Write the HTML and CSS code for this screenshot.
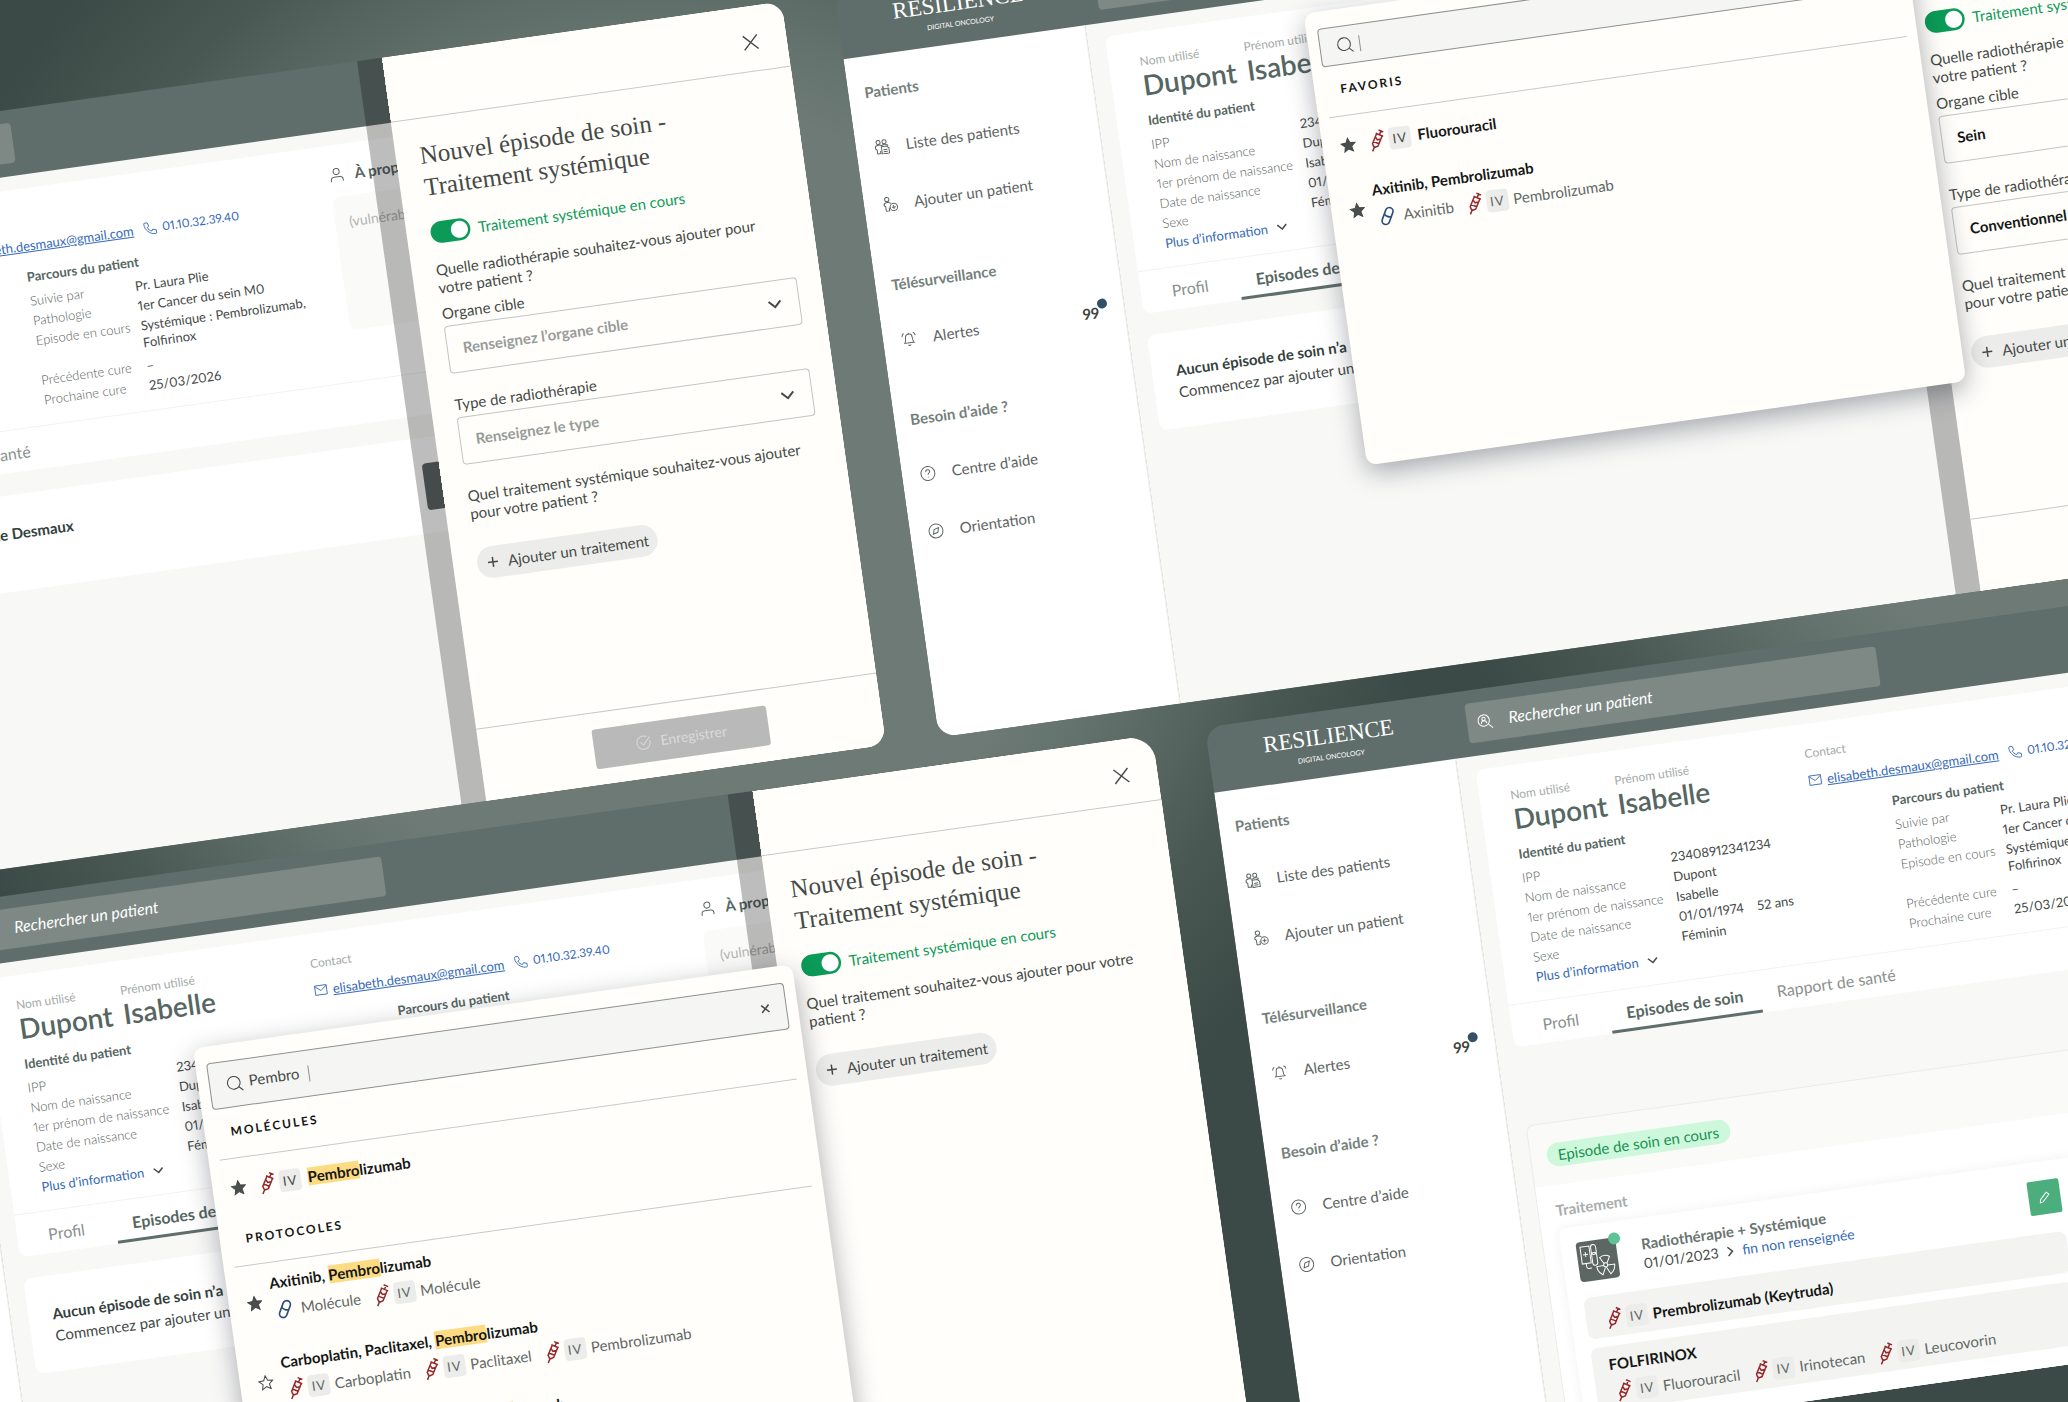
FILE: index.html
```html
<!DOCTYPE html>
<html lang="fr">
<head>
    <meta charset="UTF-8">
    <meta name="viewport" content="width=device-width, initial-scale=1.0">
    <title>Resilience - Episodes de soin</title>
    <link rel="stylesheet" href="styles.css">
</head>
<body>
    <!-- Icons -->
    <svg class="sprite" aria-hidden="true">
        <symbol id="i-list" viewBox="0 0 24 24">
            <circle cx="7" cy="5" r="3"/><circle cx="16" cy="5" r="3"/>
            <path d="M4 22v-6l-2-2v-2c0-2 2-3 5-3 2 0 3 0 4.500 1.500C13 9.500 14 9 16 9c3 0 5 1 5 3M4 22h5v-4"/>
            <path d="M11 12h8l3 3v8H11zM13.500 17h6M13.500 20h6"/>
        </symbol>
        <symbol id="i-add" viewBox="0 0 24 24">
            <circle cx="8" cy="4.500" r="3.200"/>
            <path d="M5 22v-7l-2-2v-1c0-2 2-3 5-3s5 1 5 2.500M5 22h5v-5"/>
            <circle cx="17" cy="17" r="5.500"/><path d="M17 14v6M14 17h6"/>
        </symbol>
        <symbol id="i-bell" viewBox="0 0 24 24">
            <path d="M5 18c2-2 2-4 2-8 0-3 2-5 5-5s5 2 5 5c0 4 0 6 2 8zM10 21c1 1.500 3 1.500 4 0M12 5V3M2 8c0-3 1-4 3-5M22 8c0-3-1-4-3-5"/>
        </symbol>
        <symbol id="i-help" viewBox="0 0 24 24">
            <circle cx="12" cy="12" r="10.500"/><path d="M9 9.500c0-4 6-4 6-.5 0 2.500-3 2.500-3 5M12 17v1"/>
        </symbol>
        <symbol id="i-compass" viewBox="0 0 24 24">
            <circle cx="12" cy="12" r="10.500"/><path d="M16.500 7.500l-2 7-7 2 2-7z"/>
        </symbol>
        <symbol id="i-search-user" viewBox="0 0 24 24">
            <circle cx="10.500" cy="10.500" r="8.500"/><path d="M17 17l6 6M6.500 15c0-3 2-4 4-4s4 1 4 4"/><circle cx="10.500" cy="8" r="2.500"/>
        </symbol>
        <symbol id="i-search" viewBox="0 0 24 24">
            <circle cx="11" cy="11" r="9"/><path d="M17.500 17.500L23 23"/>
        </symbol>
        <symbol id="i-mail" viewBox="0 0 24 24"><path d="M2 4h20v16H2zM2 5l10 8L22 5"/></symbol>
        <symbol id="i-phone" viewBox="0 0 24 24">
            <path d="M3 2h5l2 6-3 2c1 3 4 6 7 7l2-3 6 2v4c0 2-1 2-3 2C10 22 2 13 2 5c0-2 0-3 1-3z"/>
        </symbol>
        <symbol id="i-user" viewBox="0 0 24 24"><circle cx="12" cy="7" r="4.500"/><path d="M3 22v-2c0-3 2-5 5-5h8c3 0 5 2 5 5v2"/></symbol>
        <symbol id="i-down" viewBox="0 0 24 24"><path d="M3 7.500l9 9 9-9"/></symbol>
        <symbol id="i-right" viewBox="0 0 24 24"><path d="M8 3l9 9-9 9"/></symbol>
        <symbol id="i-close" viewBox="0 0 24 24"><path d="M2 2l20 20M22 2L2 22"/></symbol>
        <symbol id="i-plus" viewBox="0 0 24 24"><path d="M12 2v20M2 12h20"/></symbol>
        <symbol id="i-star" viewBox="0 0 24 24"><path d="M12 2l3 7 7.500.7-5.700 5 1.700 7.500L12 18.300l-6.500 3.900 1.700-7.500-5.700-5L9 9z"/></symbol>
        <symbol id="i-check" viewBox="0 0 24 24"><path d="M21.500 9.500A10 10 0 1 1 17 3.500M7.500 11l4 4.500L22 4"/></symbol>
        <symbol id="i-pen" viewBox="0 0 24 24"><path d="M16.500 2.500l5 5L8 21l-6 1.500L3.500 16z"/></symbol>
        <symbol id="i-syringe" viewBox="0 0 24 24">
            <g transform="rotate(30 12 12)"><path d="M9.500 1.500h5M12 1.500v4M8 5.500h8M9 5.500v11l2 2h2l2-2v-11M9 9l3 2 3-2M9 14h6M12 18.500v5"/></g>
        </symbol>
        <symbol id="i-pill" viewBox="0 0 24 24">
            <g transform="rotate(28 12 12)"><rect x="7.500" y="1.500" width="9" height="21" rx="4.500"/><path d="M7.500 11c2 2 7 2 9 0"/></g>
        </symbol>
        <symbol id="i-care" viewBox="0 0 40 40">
            <path d="M4 5h9v17H4zM6 13h5M8.500 10.500v5M8 22v3c0 2 2 3 5 2"/>
            <rect x="14.500" y="4" width="5" height="10" rx="2.500"/><rect x="14.500" y="12" width="5" height="13" rx="2.500"/>
            <circle cx="27" cy="26" r="2"/><path d="M25.500 24.500L22 18c3-2 7-2 10 0l-3.500 6.500M25 26.500h-7c0 4 2 7 5 9l3.500-7M29 26.500h7c0 4-2 7-5 9l-3.500-7"/>
        </symbol>
    </svg>

    <!-- Parts shared by every window -->
    <template id="topbar">
        <span class="logo"><span class="logo-name">RESILIENCE</span><span class="logo-sub">DIGITAL ONCOLOGY</span></span>
        <label class="patient-search">
            <svg class="icon"><use href="#i-search-user"/></svg>
            <input type="search" placeholder="Rechercher un patient" aria-label="Rechercher un patient">
        </label>
    </template>

    <template id="sidebar">
        <h2>Patients</h2>
        <a href="#"><svg class="icon"><use href="#i-list"/></svg>Liste des patients</a>
        <a href="#"><svg class="icon"><use href="#i-add"/></svg>Ajouter un patient</a>
        <h2>Télésurveillance</h2>
        <a href="#"><svg class="icon"><use href="#i-bell"/></svg>Alertes<span class="count">99</span></a>
        <h2>Besoin d’aide ?</h2>
        <a href="#"><svg class="icon"><use href="#i-help"/></svg>Centre d’aide</a>
        <a href="#"><svg class="icon"><use href="#i-compass"/></svg>Orientation</a>
    </template>

    <template id="patient">
        <div class="patient-info">
            <div class="identity">
                <div class="names">
                    <div><span class="hint">Nom utilisé</span><strong>Dupont</strong></div>
                    <div><span class="hint">Prénom utilisé</span><strong>Isabelle</strong></div>
                </div>
                <h3>Identité du patient</h3>
                <dl>
                    <dt>IPP</dt><dd>23408912341234</dd>
                    <dt>Nom de naissance</dt><dd>Dupont</dd>
                    <dt>1er prénom de naissance</dt><dd>Isabelle</dd>
                    <dt>Date de naissance</dt><dd>01/01/1974 <span class="age">52 ans</span></dd>
                    <dt>Sexe</dt><dd>Féminin</dd>
                </dl>
                <a class="more" href="#">Plus d’information <svg class="icon"><use href="#i-down"/></svg></a>
            </div>
            <div class="contact">
                <span class="hint">Contact</span>
                <div class="contact-links">
                    <svg class="icon"><use href="#i-mail"/></svg><a class="mail" href="mailto:elisabeth.desmaux@gmail.com">elisabeth.desmaux@gmail.com</a>
                    <svg class="icon"><use href="#i-phone"/></svg><a class="phone" href="tel:0110323940">01.10.32.39.40</a>
                </div>
                <div class="pathway">
                    <h3>Parcours du patient</h3>
                    <dl>
                        <dt>Suivie par</dt><dd>Pr. Laura Plie</dd>
                        <dt>Pathologie</dt><dd>1er Cancer du sein M0</dd>
                        <dt class="tall">Episode en cours</dt><dd class="tall">Systémique : Pembrolizumab, Folfirinox</dd>
                        <dt>Précédente cure</dt><dd>–</dd>
                        <dt>Prochaine cure</dt><dd>25/03/2026</dd>
                    </dl>
                </div>
            </div>
            <div class="about">
                <h3><svg class="icon"><use href="#i-user"/></svg>À propos</h3>
                <p>(vulnérabilité, contexte de vie)</p>
            </div>
        </div>
        <nav class="tabs">
            <a href="#">Profil</a>
            <a class="active" href="#">Episodes de soin</a>
            <a href="#">Rapport de santé</a>
        </nav>
    </template>

    <template id="empty">
        <div>
            <h3>Aucun épisode de soin n’a été démarré pour Mme Desmaux</h3>
            <p>Commencez par ajouter un traitement au besoin</p>
        </div>
        <button type="button">Ajouter un épisode</button>
    </template>

    <template id="drawer-top">
        <div class="drawer-bar">
            <button type="button" aria-label="Fermer"><svg class="icon"><use href="#i-close"/></svg></button>
        </div>
        <h1>Nouvel épisode de soin -<br>Traitement systémique</h1>
        <label class="toggle"><input type="checkbox" checked>Traitement systémique en cours</label>
    </template>

    <div class="board">
        <div class="row">
            <div class="window">
                <header class="topbar" data-part="topbar"></header>
                <aside class="sidebar" data-part="sidebar"></aside>
                <main>
                    <section class="card" data-part="patient"></section>
                    <section class="card empty" data-part="empty"></section>
                </main>
                <div class="drawer">
                    <div data-part="drawer-top"></div>
                    <p class="question">Quelle radiothérapie souhaitez-vous ajouter pour<br>votre patient ?</p>
                    <label class="field">Organe cible
                        <span class="select"><select class="unset"><option>Renseignez l’organe cible</option></select><svg class="icon"><use href="#i-down"/></svg></span>
                    </label>
                    <label class="field">Type de radiothérapie
                        <span class="select"><select class="unset"><option>Renseignez le type</option></select><svg class="icon"><use href="#i-down"/></svg></span>
                    </label>
                    <p class="question">Quel traitement systémique souhaitez-vous ajouter<br>pour votre patient ?</p>
                    <button class="add" type="button"><svg class="icon"><use href="#i-plus"/></svg>Ajouter un traitement</button>
                    <div class="drawer-footer">
                        <button type="button" disabled><svg class="icon"><use href="#i-check"/></svg>Enregistrer</button>
                    </div>
                </div>
            </div>

            <div class="window">
                <header class="topbar" data-part="topbar"></header>
                <aside class="sidebar" data-part="sidebar"></aside>
                <main>
                    <section class="card" data-part="patient"></section>
                    <section class="card empty" data-part="empty"></section>
                </main>
                <div class="drawer">
                    <div data-part="drawer-top"></div>
                    <p class="question">Quelle radiothérapie souhaitez-vous ajouter pour<br>votre patient ?</p>
                    <label class="field">Organe cible
                        <span class="select"><select><option>Sein</option></select><svg class="icon"><use href="#i-down"/></svg></span>
                    </label>
                    <label class="field">Type de radiothérapie
                        <span class="select"><select><option>Conventionnel</option></select><svg class="icon"><use href="#i-down"/></svg></span>
                    </label>
                    <p class="question">Quel traitement systémique souhaitez-vous ajouter<br>pour votre patient ?</p>
                    <button class="add" type="button"><svg class="icon"><use href="#i-plus"/></svg>Ajouter un traitement</button>
                    <div class="drawer-footer">
                        <button type="button" disabled><svg class="icon"><use href="#i-check"/></svg>Enregistrer</button>
                    </div>
                </div>
                <div class="picker picker-favorites">
                    <div class="picker-search">
                        <svg class="icon"><use href="#i-search"/></svg>
                        <span class="caret"></span><input type="text" aria-label="Rechercher un traitement">
                    </div>
                    <h4>FAVORIS</h4>
                    <div class="drug">
                        <svg class="icon star on"><use href="#i-star"/></svg>
                        <svg class="icon syringe"><use href="#i-syringe"/></svg><span class="route">IV</span><b>Fluorouracil</b>
                    </div>
                    <div class="protocol">
                        <svg class="icon star on"><use href="#i-star"/></svg>
                        <div>
                            <b>Axitinib, Pembrolizumab</b>
                            <div class="molecules">
                                <span><svg class="icon pill"><use href="#i-pill"/></svg>Axinitib</span>
                                <span><svg class="icon syringe"><use href="#i-syringe"/></svg><span class="route">IV</span>Pembrolizumab</span>
                            </div>
                        </div>
                    </div>
                </div>
            </div>
        </div>

        <div class="row shifted">
            <div class="window rounder">
                <header class="topbar" data-part="topbar"></header>
                <aside class="sidebar" data-part="sidebar"></aside>
                <main>
                    <section class="card" data-part="patient"></section>
                    <section class="card empty" data-part="empty"></section>
                </main>
                <div class="drawer">
                    <div data-part="drawer-top"></div>
                    <p class="question">Quel traitement souhaitez-vous ajouter pour votre<br>patient ?</p>
                    <button class="add" type="button"><svg class="icon"><use href="#i-plus"/></svg>Ajouter un traitement</button>
                </div>
                <div class="picker picker-results">
                    <div class="picker-search">
                        <svg class="icon"><use href="#i-search"/></svg>
                        <input class="typed" type="text" value="Pembro" aria-label="Rechercher un traitement"><span class="caret"></span>
                        <button type="button" aria-label="Effacer"><svg class="icon"><use href="#i-close"/></svg></button>
                    </div>
                    <h4>MOLÉCULES</h4>
                    <div class="drug">
                        <svg class="icon star on"><use href="#i-star"/></svg>
                        <svg class="icon syringe"><use href="#i-syringe"/></svg><span class="route">IV</span><b><mark>Pembro</mark>lizumab</b>
                    </div>
                    <h4>PROTOCOLES</h4>
                    <div class="protocol">
                        <svg class="icon star on"><use href="#i-star"/></svg>
                        <div>
                            <b>Axitinib, <mark>Pembro</mark>lizumab</b>
                            <div class="molecules">
                                <span><svg class="icon pill"><use href="#i-pill"/></svg>Molécule</span>
                                <span><svg class="icon syringe"><use href="#i-syringe"/></svg><span class="route">IV</span>Molécule</span>
                            </div>
                        </div>
                    </div>
                    <div class="protocol">
                        <svg class="icon star"><use href="#i-star"/></svg>
                        <div>
                            <b>Carboplatin, Paclitaxel, <mark>Pembro</mark>lizumab</b>
                            <div class="molecules">
                                <span><svg class="icon syringe"><use href="#i-syringe"/></svg><span class="route">IV</span>Carboplatin</span>
                                <span><svg class="icon syringe"><use href="#i-syringe"/></svg><span class="route">IV</span>Paclitaxel</span>
                                <span><svg class="icon syringe"><use href="#i-syringe"/></svg><span class="route">IV</span>Pembrolizumab</span>
                            </div>
                        </div>
                    </div>
                    <div class="protocol">
                        <svg class="icon star"><use href="#i-star"/></svg>
                        <div><b>Carboplatin, Pemetrexed, <mark>Pembro</mark>lizumab</b></div>
                    </div>
                </div>
            </div>

            <div class="window">
                <header class="topbar" data-part="topbar"></header>
                <aside class="sidebar" data-part="sidebar"></aside>
                <main>
                    <section class="card" data-part="patient"></section>
                    <section class="episode">
                        <span class="status">Episode de soin en cours</span>
                        <div class="episode-body">
                            <h3>Traitement</h3>
                            <div class="treatment">
                                <div class="treatment-head">
                                    <span class="tile"><svg class="icon"><use href="#i-care"/></svg></span>
                                    <div>
                                        <h4>Radiothérapie + Systémique</h4>
                                        <p>01/01/2023 <svg class="icon"><use href="#i-right"/></svg> <a href="#">fin non renseignée</a></p>
                                    </div>
                                    <button type="button" aria-label="Modifier"><svg class="icon"><use href="#i-pen"/></svg></button>
                                </div>
                                <div class="line">
                                    <div class="molecules">
                                        <span><svg class="icon syringe"><use href="#i-syringe"/></svg><span class="route">IV</span><b>Prembrolizumab (Keytruda)</b></span>
                                    </div>
                                </div>
                                <div class="line">
                                    <b>FOLFIRINOX</b>
                                    <div class="molecules">
                                        <span><svg class="icon syringe"><use href="#i-syringe"/></svg><span class="route">IV</span>Fluorouracil</span>
                                        <span><svg class="icon syringe"><use href="#i-syringe"/></svg><span class="route">IV</span>Irinotecan</span>
                                        <span><svg class="icon syringe"><use href="#i-syringe"/></svg><span class="route">IV</span>Leucovorin</span>
                                    </div>
                                </div>
                            </div>
                        </div>
                    </section>
                </main>
            </div>
        </div>
    </div>

    <script>
        // fill each window with the shared parts
        document.querySelectorAll("[data-part]").forEach(el => {
            const tpl = document.getElementById(el.dataset.part);
            el.appendChild(tpl.content.cloneNode(true));
        });
    </script>
</body>
</html>
```
FILE: styles.css
```css
* {
    box-sizing: border-box;
    margin: 0;
    padding: 0;
}
html, body {
    height: 100%;
}
body {
    overflow: hidden;
    font-family: Lato, "Liberation Sans", sans-serif;
    font-size: 15px;
    line-height: 18px;
    font-variant-numeric: proportional-nums;
    color: #454a48;
    background-color: #3b4a46;
    background-image:
        radial-gradient(circle at 660px 500px, #6d7a76 0, #6d7a76 400px, #65736e 470px, #56645f 570px, #4a5853 640px, rgba(59, 74, 70, 0) 770px),
        radial-gradient(circle at 2150px 290px, #6d7a76 0, #6d7a76 400px, #65736e 470px, #56645f 570px, #4a5853 640px, rgba(59, 74, 70, 0) 770px);
}
button, input, select {
    font: inherit;
    color: inherit;
    border: 0;
    background: none;
}
a {
    color: inherit;
    text-decoration: none;
}
.sprite {
    position: absolute;
    width: 0;
    height: 0;
}
.icon {
    flex: none;
    width: 16px;
    height: 16px;
    fill: none;
    stroke: currentColor;
    stroke-width: 1.5;
}

/* tilted board of windows */
.board {
    padding-top: 110px;
    transform: rotate(-8deg);
    transform-origin: 0 0;
}
.row {
    display: flex;
    gap: 53px;
    width: max-content;
    margin-left: -682px;
}
.row.shifted {
    margin-top: 27px;
    margin-left: -417px;
}
.window {
    position: relative;
    display: grid;
    grid-template-columns: 244px 1fr;
    grid-template-rows: 66px 1fr;
    width: 1456px;
    height: 751px;
    overflow: hidden;
    border-radius: 18px;
    background: #5f6e6b;
}
.window.rounder {
    border-radius: 26px;
}

/* top bar */
.topbar {
    grid-column: 1 / 3;
    display: flex;
    align-items: center;
    color: #fff;
}
.logo {
    display: flex;
    flex-direction: column;
    align-items: center;
    width: 242px;
    margin-right: 18px;
}
.logo-name {
    font-family: "Liberation Serif", serif;
    font-size: 23px;
    line-height: 26px;
}
.logo-sub {
    font-size: 7px;
    line-height: 14px;
}
.patient-search {
    display: flex;
    align-items: center;
    gap: 16px;
    width: 415px;
    height: 40px;
    padding: 0 10px;
    border-radius: 4px;
    background: #7e8985;
}
.patient-search input {
    flex: 1;
    padding-bottom: 2px;
    font-size: 16px;
    font-style: italic;
}
.patient-search input::placeholder {
    color: #fff;
    opacity: 1;
}

/* side menu */
.sidebar {
    padding-top: 8px;
    border-right: 1px solid #ecece8;
    background: #fff;
    color: #5d6462;
}
.sidebar h2 {
    padding-left: 16px;
    font-size: 15px;
    line-height: 56px;
    color: #74807c;
}
.sidebar a + h2 {
    margin-top: 22px;
}
.sidebar a {
    display: flex;
    align-items: center;
    gap: 16px;
    height: 58px;
    padding: 0 25px 2px 18px;
}
.count {
    position: relative;
    margin-left: auto;
    font-weight: bold;
    color: #3c4441;
}
.count::after {
    content: "";
    position: absolute;
    top: -4px;
    right: -9px;
    width: 10px;
    height: 10px;
    border-radius: 50%;
    background: #345068;
}

/* patient card */
main {
    padding: 14px 18px;
    background: #f8f8f7;
}
.card {
    border-radius: 8px;
    background: #fff;
}
.patient-info {
    display: grid;
    grid-template-columns: 297px 393px 1fr;
    padding: 22px 31px 14px;
    border-bottom: 1px solid #f1f2f1;
    font-size: 13px;
    line-height: 20px;
}
.hint {
    display: block;
    font-size: 12px;
    line-height: 16px;
    color: #a5aaa8;
}
.names {
    display: flex;
}
.names div {
    min-width: 105px;
}
.names strong {
    font-size: 28px;
    line-height: 30px;
    font-weight: 600;
    color: #566662;
}
.patient-info h3 {
    margin: 12px 0 6px;
    font-size: 13px;
    line-height: 16px;
    color: #566662;
}
dl {
    display: grid;
    grid-template-columns: 150px auto;
    grid-auto-rows: 20px;
    justify-content: start;
}
dt {
    font-weight: 300;
    color: #565d5a;
}
.age {
    margin-left: 10px;
}
.more, .contact-links {
    display: flex;
    align-items: center;
    color: #3569b8;
}
.more .icon {
    width: 12px;
    height: 12px;
    margin-left: 8px;
    stroke-width: 3;
    color: #454a48;
}
.contact-links {
    gap: 5px;
    margin-top: 9px;
}
.contact-links .icon {
    width: 14px;
    height: 14px;
}
.mail {
    margin-right: 5px;
    text-decoration: underline;
}
.phone {
    font-size: 12px;
}
.pathway {
    margin: 13px 0 0 80px;
}
.pathway dl {
    grid-template-columns: 106px 180px;
}
.tall {
    grid-row: span 2;
}
dd.tall {
    line-height: 17px;
    padding-top: 2px;
}
.about h3 {
    display: flex;
    align-items: center;
    gap: 10px;
    margin: 0 0 14px;
    font-size: 15px;
}
.about p {
    height: 134px;
    padding: 16px 14px;
    border-radius: 8px;
    background: #fafaf9;
    color: #b1b5b3;
    font-size: 14px;
}
.tabs {
    display: flex;
    height: 42px;
    padding-left: 14px;
    font-size: 16px;
    line-height: 46px;
    color: #8a918e;
}
.tabs a {
    padding: 0 17px;
}
.tabs a:first-child {
    margin-right: 14px;
}
.tabs .active {
    border-bottom: 3px solid #5f6e6b;
    font-weight: 700;
    color: #566662;
}
.empty {
    display: flex;
    justify-content: space-between;
    align-items: center;
    height: 96px;
    margin-top: 22px;
    padding: 2px 24px 0;
    line-height: 22px;
}
.empty h3 {
    font-size: 15px;
    color: #33413d;
}
.empty button {
    width: 379px;
    height: 47px;
    border-radius: 4px;
    background: #5d6664;
    color: #fff;
}

/* drawer, its left border is the dimmed page */
.drawer {
    position: absolute;
    top: 0;
    right: 0;
    bottom: 0;
    width: 429px;
    border-left: 25px solid rgba(0, 0, 0, .26);
    background: #fffefb;
    background-clip: padding-box;
}
.drawer-bar {
    display: flex;
    justify-content: flex-end;
    align-items: center;
    height: 66px;
    padding: 8px 28px 0 0;
    border-bottom: 1px solid #c8caca;
}
.drawer-bar button, .drawer-bar .icon {
    display: block;
    width: 17px;
    height: 17px;
}
.drawer-bar .icon {
    stroke-width: 2;
}
.drawer h1 {
    margin: 21px 24px 19px;
    font-family: "Liberation Serif", serif;
    font-size: 25px;
    line-height: 32px;
    font-weight: normal;
}
.toggle {
    display: flex;
    align-items: center;
    gap: 8px;
    margin: 0 24px 17px;
    color: #0b9a57;
}
.toggle input {
    appearance: none;
    width: 40px;
    height: 22px;
    border-radius: 11px;
    background: radial-gradient(circle at 29px 11px, #fff 8px, #0b9a57 9px);
}
.question {
    margin: 0 24px 8px;
}
.field {
    display: block;
    margin: 0 24px 22px;
}
.select {
    position: relative;
    display: block;
    margin-top: 4px;
}
.select select {
    appearance: none;
    display: block;
    width: 100%;
    height: 48px;
    padding: 0 15px 2px;
    border: 1px solid #c2c5c4;
    border-radius: 4px;
    font-weight: bold;
    color: #151716;
}
.select .unset {
    color: #979b99;
}
.select .icon {
    position: absolute;
    top: 16px;
    right: 17px;
    stroke-width: 3;
}
.add {
    display: flex;
    align-items: center;
    gap: 9px;
    height: 32px;
    margin: 26px 24px 0;
    padding: 0 9px 1px 10px;
    border-radius: 16px;
    background: #ecedea;
}
.add .icon {
    width: 12px;
    height: 12px;
    stroke-width: 3;
}
.drawer-footer {
    position: absolute;
    right: 0;
    bottom: 0;
    left: 0;
    padding: 16px 0;
    border-top: 1px solid #c8caca;
}
.drawer-footer button {
    display: flex;
    justify-content: center;
    align-items: center;
    gap: 9px;
    width: 176px;
    height: 40px;
    margin: 0 auto;
    border-radius: 3px;
    background: #b9b9b9;
    font-size: 14px;
    color: #dadada;
}

/* treatment picker */
.picker {
    position: absolute;
    top: 85px;
    left: 462px;
    width: 605px;
    height: 456px;
    padding-top: 17px;
    border-radius: 10px;
    background: #fffefb;
    box-shadow: 0 8px 26px rgba(20, 24, 40, .36);
}
.picker-results {
    top: 177px;
    height: 640px;
}
.picker-search {
    display: flex;
    align-items: center;
    height: 39px;
    margin: 0 11px;
    padding: 0 16px;
    border: 1px solid #8d918f;
    border-radius: 4px;
    background: #f5f5f3;
}
.picker-results .picker-search {
    height: 47px;
}
.picker-search .icon {
    width: 17px;
    height: 17px;
    margin-right: 6px;
}
.typed {
    width: 60px;
    padding-bottom: 4px;
}
.caret {
    width: 1px;
    height: 16px;
    background: #8d918f;
}
.picker-search button {
    margin-left: auto;
}
.picker-search button .icon {
    display: block;
    width: 9px;
    height: 9px;
    margin: 0;
    stroke-width: 4;
}
.picker h4 {
    margin: 0 11px;
    padding: 12px 15px 14px;
    border-bottom: 1px solid #c8caca;
    font-size: 12px;
    line-height: 24px;
    font-weight: 700;
    letter-spacing: 2px;
    color: #151716;
}
.picker b, .line b {
    color: #151716;
}
.drug, .protocol {
    display: flex;
    align-items: center;
    height: 57px;
    padding-left: 18px;
}
.drug .star {
    margin-right: 9px;
}
.drug b {
    margin-left: 2px;
    padding-bottom: 2px;
}
.protocol {
    align-items: flex-start;
    height: 80px;
    padding-top: 10px;
}
.protocol b, .line b {
    display: block;
    line-height: 20px;
}
.protocol .star {
    margin: 20px 9px 0 0;
}
.star.on {
    fill: #4a4f4d;
}
.syringe {
    width: 24px;
    height: 24px;
    color: #96282a;
}
.pill {
    width: 20px;
    height: 20px;
    margin: 0 6px 0 2px;
    stroke-width: 2;
    color: #2b4d80;
}
.route {
    width: 22px;
    height: 22px;
    margin-right: 5px;
    border-radius: 4px;
    background: #ecedea;
    font-size: 13px;
    line-height: 22px;
    text-align: center;
    letter-spacing: 1px;
}
.molecules {
    display: flex;
    gap: 9px;
    margin-top: 6px;
    color: #626866;
}
.molecules > span {
    display: flex;
    align-items: center;
    height: 24px;
}
mark {
    background: #fddb83;
    color: inherit;
}

/* current episode */
.episode {
    margin-top: 79px;
    padding-top: 20px;
    border: 1px solid #ebebe8;
    border-radius: 8px;
    background: #fafaf9;
}
.status {
    display: inline-block;
    margin: 0 16px 18px;
    padding: 0 11px;
    border-radius: 12px;
    background: #cdf8dc;
    line-height: 24px;
    color: #17914f;
}
.episode-body {
    padding: 16px 17px;
    background: #fff;
}
.episode-body h3 {
    margin-bottom: 10px;
    font-size: 15px;
    color: #a9adab;
}
.treatment {
    width: 520px;
    padding: 16px 18px 16px 15px;
    border-radius: 8px;
    box-shadow: 0 0 12px rgba(0, 0, 0, .06);
}
.treatment-head {
    display: flex;
    align-items: center;
    height: 40px;
    margin-bottom: 16px;
}
.tile {
    position: relative;
    width: 40px;
    height: 40px;
    margin-right: 25px;
    border-radius: 4px;
    background: #5c6764;
    color: #fff;
}
.tile .icon {
    width: 40px;
    height: 40px;
    stroke-width: 1;
}
.tile::after {
    content: "";
    position: absolute;
    top: -5px;
    right: -5px;
    width: 12px;
    height: 12px;
    border-radius: 50%;
    background: #5cc496;
}
.treatment h4 {
    font-size: 15px;
    line-height: 20px;
    color: #6a7471;
}
.treatment p {
    display: flex;
    align-items: center;
    gap: 6px;
    font-size: 14px;
    line-height: 20px;
}
.treatment p .icon {
    width: 12px;
    height: 12px;
    stroke-width: 3;
}
.treatment p a {
    color: #3569b8;
}
.treatment-head button {
    display: grid;
    place-items: center;
    width: 32px;
    height: 34px;
    margin-left: auto;
    border-radius: 2px;
    background: #4cae7c;
    color: #fff;
}
.treatment-head button .icon {
    width: 12px;
    height: 12px;
    stroke-width: 2;
}
.line {
    margin-bottom: 9px;
    padding: 6px 16px;
    border-radius: 8px;
    background: #f3f4f1;
}
.line > b {
    padding-top: 2px;
}
```
